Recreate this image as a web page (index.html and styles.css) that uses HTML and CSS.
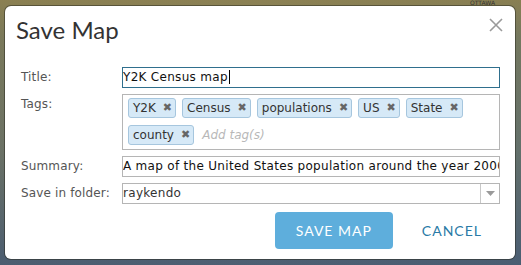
FILE: index.html
```html
<!DOCTYPE html>
<html>
<head>
<meta charset="utf-8">
<link rel="stylesheet" href="styles.css">
</head>
<body>
<div class="map">
  <span class="city">OTTAWA</span>
  <div class="dialog">
    <div class="header">
      <h1 class="heading">Save Map</h1>
      <svg class="close" width="14" height="14" viewBox="0 0 14 14"><path d="M1 1L13 13M13 1L1 13" stroke="#9a9a9a" stroke-width="1.6" fill="none"/></svg>
    </div>
    <div class="form">
      <label class="label">Title:</label>
      <div class="input focused">Y2K Census map<span class="caret"></span></div>
      <label class="label">Tags:</label>
      <div class="tags">
        <span class="chip">Y2K<span class="x">✖</span></span>
        <span class="chip">Census<span class="x">✖</span></span>
        <span class="chip">populations<span class="x">✖</span></span>
        <span class="chip">US<span class="x">✖</span></span>
        <span class="chip">State<span class="x">✖</span></span>
        <span class="chip">county<span class="x">✖</span></span>
        <span class="placeholder">Add tag(s)</span>
      </div>
      <label class="label">Summary:</label>
      <div class="input">A map of the United States population around the year 2000</div>
      <label class="label">Save in folder:</label>
      <div class="input select"><span class="value">raykendo</span><span class="arrow"><svg width="9" height="5" viewBox="0 0 9 5"><path d="M0 0H9L4.5 5Z" fill="#9a9a9a"/></svg></span></div>
    </div>
    <div class="footer">
      <button class="btn primary">SAVE MAP</button>
      <button class="btn link">CANCEL</button>
    </div>
  </div>
</div>
</body>
</html>
```
FILE: styles.css
```css
html, body {
  margin: 0;
  padding: 0;
}
body {
  width: 521px;
  height: 265px;
  overflow: hidden;
}
.map {
  position: relative;
  width: 521px;
  height: 265px;
  box-sizing: border-box;
  padding: 6px 6px 6px 5px;
  background:
    linear-gradient(180deg, rgba(140,128,80,0.9) 0px, rgba(120,120,90,0.6) 40px, rgba(90,105,110,0.5) 150px, rgba(70,90,115,0.9) 265px),
    linear-gradient(90deg, #7c7a5c 0%, #8a8a70 50%, #6d7768 100%);
}
.city {
  position: absolute;
  right: 26px;
  top: 0;
  font-family: "DejaVu Sans", sans-serif;
  font-size: 6px;
  line-height: 6px;
  color: #333;
}
.dialog {
  position: relative;
  width: 510px;
  height: 253px;
  box-sizing: border-box;
  background: #fff;
  border-radius: 6px;
  box-shadow: 0 0 0 1px rgba(40,40,30,0.5);
  padding: 0 14px 0 16px;
}
.header {
  display: flex;
  justify-content: space-between;
  align-items: flex-start;
  height: 61px;
  margin-left: -5px;
}
.heading {
  margin: 0;
  padding-top: 9px;
  font-family: "Lato", "Open Sans", sans-serif;
  font-weight: 400;
  font-size: 24px;
  line-height: 30px;
  color: #333;
}
.close {
  margin-top: 12px;
  margin-right: -2px;
}
.form {
  display: grid;
  grid-template-columns: 101px 378px;
  row-gap: 6px;
  font-family: "DejaVu Sans", "Verdana", sans-serif;
  font-size: 12px;
}
.label {
  color: #555;
  line-height: 21px;
  letter-spacing: 0.15px;
}
.input {
  height: 21px;
  box-sizing: border-box;
  border: 1px solid #b5b5b5;
  line-height: 19px;
  padding-left: 0;
  color: #111;
  white-space: nowrap;
  overflow: hidden;
  letter-spacing: 0.3px;
}
.focused {
  border-color: #2f6f8d;
}
.caret {
  display: inline-block;
  width: 1px;
  height: 14px;
  background: #000;
  vertical-align: -3px;
  margin-left: 1px;
}
.tags {
  box-sizing: border-box;
  height: 56px;
  border: 1px solid #b5b5b5;
  padding: 3px 5px;
  display: flex;
  flex-wrap: wrap;
  align-content: flex-start;
  gap: 7px 6px;
}
.chip {
  display: inline-flex;
  align-items: center;
  height: 20px;
  box-sizing: border-box;
  padding: 0 3px 0 4px;
  background: #d6e9f7;
  border: 1px solid #a6c6de;
  border-radius: 3px;
  color: #333;
  line-height: 18px;
}
.x {
  margin-left: 7px;
  font-size: 11px;
  color: #666;
}
.placeholder {
  font-style: italic;
  color: #b8b8b8;
  line-height: 20px;
  margin-left: 2px;
}
.select {
  display: flex;
  color: #333;
}
.select .value {
  flex: 1;
}
.arrow {
  width: 18px;
  border-left: 1px solid #c8c8c8;
  display: flex;
  align-items: center;
  justify-content: center;
}
.footer {
  display: flex;
  justify-content: flex-end;
  align-items: center;
  gap: 10px;
  margin-top: 8px;
}
.btn {
  font-family: "Lato", "Open Sans", sans-serif;
  font-size: 14px;
  letter-spacing: 1px;
  border: none;
  cursor: pointer;
  height: 37px;
  border-radius: 4px;
}
.primary {
  width: 118px;
  background: #5eaedc;
  color: #fff;
}
.link {
  background: transparent;
  color: #2a7aa6;
  padding: 0 19px;
}
```
